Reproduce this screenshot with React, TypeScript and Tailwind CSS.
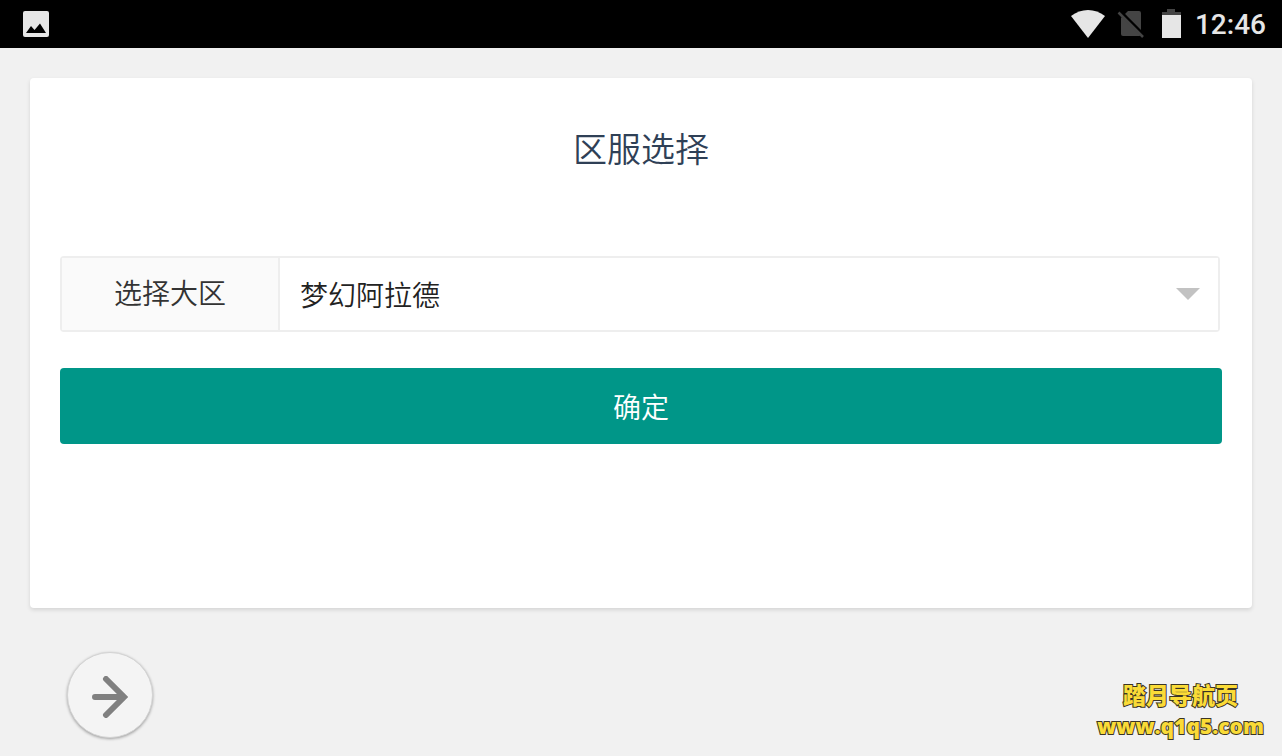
import { useState } from "react"

const regions = ["梦幻阿拉德"]

function StatusBar() {
  return (
    <header className="flex h-12 items-center justify-between bg-black pr-4 pl-[23px] text-[#e6e6e6]">
      <svg className="size-[26px]" viewBox="0 0 26 26" aria-hidden="true">
        <rect width="26" height="26" rx="2" fill="currentColor" />
        <path d="M3 22 8 15l3.500 4L17 12.500l6 9.500z" fill="#000" />
      </svg>
      <div className="flex items-center">
        <svg className="h-7 w-[34px]" viewBox="0 0 34 28" aria-hidden="true">
          <path d="M0 6C10-2 24-2 34 6L17 28z" fill="currentColor" />
        </svg>
        <svg className="ml-3 h-7 w-7" viewBox="0 0 28 28" aria-hidden="true">
          <path d="M11 1h11a2 2 0 0 1 2 2v21a2 2 0 0 1-2 2H6a2 2 0 0 1-2-2V8z" fill="#444" />
          <path d="M3 1 28 26" stroke="#000" strokeWidth="3" />
          <path d="M1.500 2.500 26 27" stroke="#444" strokeWidth="2.500" />
        </svg>
        <svg className="ml-4 h-[30px] w-5" viewBox="0 0 20 30" aria-hidden="true">
          <path d="M6 0h8v3h6v4H1V3h5z" fill="#444" />
          <path d="M1 6h19v23H1z" fill="currentColor" />
        </svg>
        <time className="ml-3.5 pt-0.5 font-[Roboto,sans-serif] text-[28px] leading-8 font-medium">12:46</time>
      </div>
    </header>
  )
}

export default function App() {
  const [region, setRegion] = useState(regions[0])

  return (
    <div className="flex min-h-screen flex-col bg-[#f1f1f1] font-['Noto_Sans_CJK_SC',sans-serif]">
      <StatusBar />

      <main className="mx-[30px] mt-[30px] min-h-[530px] rounded-sm bg-white px-[30px] shadow-[0_2px_4px_rgba(0,0,0,0.12)]">
        <h1 className="pt-[46px] text-center text-[34px] leading-[48px] font-[350] text-[#2f4056]">区服选择</h1>

        <form onSubmit={(e) => e.preventDefault()} className="mt-[84px]">
          <div className="mr-[2px] flex h-[76px] rounded-sm border-2 border-[#eee]">
            <label
              htmlFor="region"
              className="flex w-[218px] items-center justify-center border-r-2 border-[#eee] bg-[#fafafa] pb-1 text-[28px] font-[350] text-[#333]"
            >
              选择大区
            </label>
            <div className="relative flex-1">
              <select
                id="region"
                value={region}
                onChange={(e) => setRegion(e.target.value)}
                className="size-full appearance-none bg-white pl-5 text-[28px] font-[350] text-[#222] outline-none"
              >
                {regions.map((name) => (
                  <option key={name}>{name}</option>
                ))}
              </select>
              <svg
                className="pointer-events-none absolute top-[30px] right-[18px] h-3 w-6"
                viewBox="0 0 24 12"
                aria-hidden="true"
              >
                <path d="M0 0h24L12 12z" fill="#c2c2c2" />
              </svg>
            </div>
          </div>

          <button
            type="submit"
            className="mt-9 h-[76px] w-full cursor-pointer rounded-sm bg-[#009688] text-[28px] font-[350] text-white"
          >
            确定
          </button>
        </form>
      </main>

      <footer className="mt-11 flex items-start justify-between pr-[18px] pl-[67px]">
        <button
          type="button"
          aria-label="Next"
          className="flex size-[86px] cursor-pointer items-center justify-center rounded-full border border-[#d4d4d4] bg-[#f4f4f4] pt-1 shadow-[0_1px_3px_rgba(0,0,0,0.35)]"
        >
          <svg
            className="h-[42px] w-9"
            viewBox="0 0 36 42"
            fill="none"
            stroke="#808080"
            strokeWidth="6"
            strokeLinecap="round"
            aria-hidden="true"
          >
            <path d="M3 21h27M14 3l18 18-18 18" />
          </svg>
        </button>

        <div className="mt-[26px] text-center text-[23px] leading-8 font-black text-[#fadb37] [-webkit-text-stroke:2px_#3b3524] [paint-order:stroke_fill]">
          <p>踏月导航页</p>
          <a href="#" className="block font-['Open_Sans',sans-serif] text-[21px] font-extrabold">
            www.q1q5.com
          </a>
        </div>
      </footer>
    </div>
  )
}
